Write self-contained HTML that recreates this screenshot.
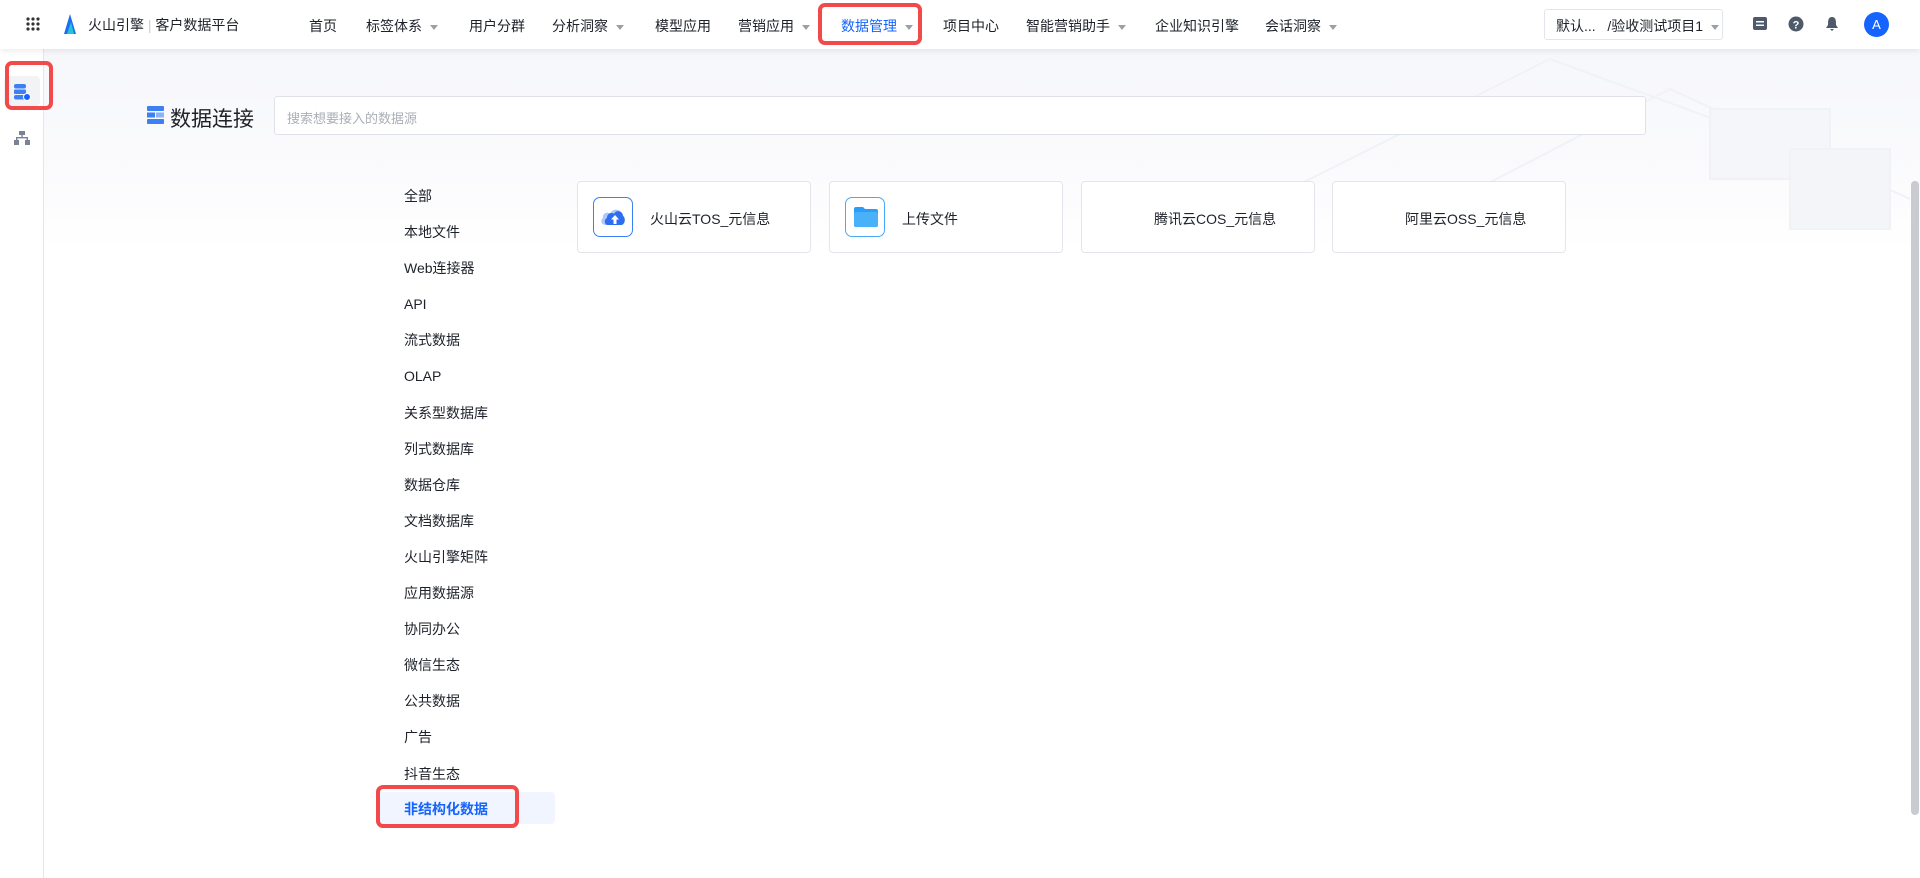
<!DOCTYPE html>
<html><head><meta charset="utf-8"><style>
*{box-sizing:border-box;margin:0;padding:0}
body{width:1920px;height:878px;overflow:hidden;font-family:"Liberation Sans","Noto Sans CJK SC",sans-serif;background:#fff;position:relative;color:#1d2129}
.top{position:absolute;left:0;top:0;width:1920px;height:49px;background:#fff;box-shadow:0 2px 6px rgba(0,0,0,.08);z-index:5}
.nav{position:absolute;top:16px;font-size:14px;color:#1d2129;white-space:nowrap}
.caret{display:inline-block;margin-left:8px;width:0;height:0;border-left:4px solid transparent;border-right:4px solid transparent;border-top:5px solid #9aa0a8;vertical-align:middle}
.red{position:absolute;border:4px solid #f24a4a;border-radius:7px}
.bg{position:absolute;left:44px;top:49px;width:1876px;height:829px;background:linear-gradient(180deg,#f6f7fb 0,#fbfbfd 130px,#fff 200px)}
.side{position:absolute;left:0;top:49px;width:44px;height:829px;background:#fff;border-right:1px solid #e5e6eb}
.menu{position:absolute;left:404px;font-size:14px;color:#1d2129}
.card{position:absolute;top:181px;width:234px;height:72px;background:#fff;border:1px solid #e2e5ea;border-radius:4px;font-size:14px}
.card span{position:absolute;top:27px}
.ic{position:absolute;left:15px;top:15px;width:40px;height:40px;border:1.5px solid #3d7ff5;border-radius:7px;background:#fff}
</style></head><body>
<div class="bg"></div>
<svg style="position:absolute;left:1150px;top:49px" width="770" height="200" viewBox="0 0 770 200"><g fill="none" stroke="#f0f2f6" stroke-width="2"><path d="M100 160 L400 10 L700 120"/><path d="M250 180 L520 40 L760 150"/><rect x="560" y="60" width="120" height="70" fill="#f5f6f9"/><rect x="640" y="100" width="100" height="80" fill="#f4f5f8"/></g></svg>
<div class="top">
 <svg style="position:absolute;left:26px;top:17px" width="14" height="14"><g fill="#333"><circle cx="2" cy="2" r="1.6"/><circle cx="7" cy="2" r="1.6"/><circle cx="12" cy="2" r="1.6"/><circle cx="2" cy="7" r="1.6"/><circle cx="7" cy="7" r="1.6"/><circle cx="12" cy="7" r="1.6"/><circle cx="2" cy="12" r="1.6"/><circle cx="7" cy="12" r="1.6"/><circle cx="12" cy="12" r="1.6"/></g></svg>
 <svg style="position:absolute;left:62px;top:14px" width="16" height="20"><path d="M2 20 L8 0 L14 20 Z" fill="#1a6ef5"/><path d="M5 20 L9 8 L12 20Z" fill="#29c2d6"/></svg>
 <div class="nav" style="left:88px;top:15px">火山引擎 <span style="color:#ccc">|</span> 客户数据平台</div>
 <div class="nav" style="left:309px">首页</div>
 <div class="nav" style="left:366px">标签体系<i class="caret"></i></div>
 <div class="nav" style="left:469px">用户分群</div>
 <div class="nav" style="left:552px">分析洞察<i class="caret"></i></div>
 <div class="nav" style="left:655px">模型应用</div>
 <div class="nav" style="left:738px">营销应用<i class="caret"></i></div>
 <div class="nav" style="left:841px;color:#1664ff">数据管理<i class="caret"></i></div>
 <div class="red" style="left:818px;top:3px;width:104px;height:42px"></div>
 <div class="nav" style="left:943px">项目中心</div>
 <div class="nav" style="left:1026px">智能营销助手<i class="caret"></i></div>
 <div class="nav" style="left:1155px">企业知识引擎</div>
 <div class="nav" style="left:1265px">会话洞察<i class="caret"></i></div>
 <div style="position:absolute;left:1544px;top:9px;width:179px;height:31px;border:1px solid #e2e5ea;border-radius:3px;font-size:14px;padding:6px 0 0 11px;white-space:nowrap">默认...&nbsp;&nbsp; /验收测试项目1<i class="caret"></i></div>
 <svg style="position:absolute;left:1753px;top:17px" width="14" height="15"><rect x="0" y="0" width="14" height="13" rx="2" fill="#4e5969"/><rect x="3" y="4" width="8" height="1.5" fill="#fff"/><rect x="3" y="7.5" width="8" height="1.5" fill="#fff"/></svg>
 <svg style="position:absolute;left:1788px;top:16px" width="16" height="16"><circle cx="8" cy="8" r="7.5" fill="#4e5969"/><text x="8" y="12.5" font-size="11" font-weight="bold" fill="#fff" text-anchor="middle" font-family="Liberation Sans">?</text></svg>
 <svg style="position:absolute;left:1825px;top:16px" width="14" height="16"><path d="M7 1 C3 1 3 5 3 9 L1 12 H13 L11 9 C11 5 11 1 7 1Z M5 13 H9 L7 15Z" fill="#4e5969"/></svg>
 <div style="position:absolute;left:1864px;top:12px;width:25px;height:25px;border-radius:50%;background:#1664ff;color:#fff;font-size:13px;text-align:center;line-height:25px">A</div>
</div>
<div class="side">
 <div style="position:absolute;left:4px;top:27px;width:36px;height:30px;background:#f2f3f5;border-radius:4px"></div>
 <svg style="position:absolute;left:13px;top:34px" width="18" height="18"><rect x="1" y="1" width="12" height="4.5" rx="2" fill="#3d7ff5"/><rect x="1" y="6.5" width="12" height="4.5" rx="1" fill="#3d7ff5"/><rect x="1" y="12" width="12" height="4.5" rx="2" fill="#3d7ff5"/><circle cx="14" cy="14" r="3.5" fill="#1664ff" stroke="#fff"/></svg>
 <svg style="position:absolute;left:14px;top:82px" width="16" height="14"><g fill="#7a8396"><rect x="5" y="0" width="6" height="4"/><rect x="0" y="9" width="5" height="5"/><rect x="11" y="9" width="5" height="5"/><rect x="7.3" y="4" width="1.4" height="3"/><rect x="2" y="6" width="12" height="1.4"/><rect x="2" y="6" width="1.4" height="3"/><rect x="12.6" y="6" width="1.4" height="3"/></g></svg>
</div>
<div class="red" style="left:5px;top:61px;width:48px;height:49px"></div>
<svg style="position:absolute;left:147px;top:106px" width="17" height="18"><rect x="0" y="0" width="17" height="5" rx="1" fill="#3d7ff5"/><rect x="0" y="6.5" width="8" height="5" fill="#3d7ff5"/><rect x="9" y="6.5" width="8" height="5" fill="#8ab2f8"/><rect x="0" y="13" width="17" height="5" rx="1" fill="#3d7ff5"/></svg>
<div style="position:absolute;left:170px;top:103px;font-size:21px;color:#1d2129">数据连接</div>
<div style="position:absolute;left:274px;top:96px;width:1372px;height:39px;background:#fff;border:1px solid #dfe2e8;border-radius:3px;font-size:13px;color:#a9aeb8;padding:11px 12px">搜索想要接入的数据源</div>
<div class="menu" style="top:178px;line-height:36.1px">全部<br>本地文件<br>Web连接器<br>API<br>流式数据<br>OLAP<br>关系型数据库<br>列式数据库<br>数据仓库<br>文档数据库<br>火山引擎矩阵<br>应用数据源<br>协同办公<br>微信生态<br>公共数据<br>广告<br>抖音生态</div>
<div style="position:absolute;left:377px;top:792px;width:178px;height:32px;background:#f0f5ff;border-radius:4px"></div>
<div class="menu" style="top:799px;color:#1664ff;font-weight:bold">非结构化数据</div>
<div class="red" style="left:376px;top:785px;width:143px;height:43px"></div>
<div class="card" style="left:577px"><div class="ic"><svg style="position:absolute;left:5px;top:6px" width="28" height="24"><path d="M7 21 C2 21 1 16 4 14 C3 9 9 7 11 10 C13 4 22 4 23 11 C27 12 27 21 22 21Z" fill="#aec8fb"/><path d="M9 21 C5 21 5 15 8 14 C8 9 13 8 15 10 C17 5 24 7 24 12 C27 14 26 21 22 21Z" fill="#2f6df0"/><path d="M16 11 L20 15.5 H17.5 V20 H14.5 V15.5 H12Z" fill="#fff"/></svg></div><span style="left:72px">火山云TOS_元信息</span></div>
<div class="card" style="left:829px"><div class="ic" style="border-color:#4aa8f8"><svg style="position:absolute;left:8px;top:9px" width="24" height="20"><path d="M0 2 Q0 0 2 0 H9 L11 2 H22 Q24 2 24 4 V18 Q24 20 22 20 H2 Q0 20 0 18Z" fill="#2b9cf7"/><rect x="0" y="5" width="24" height="15" rx="2" fill="#49b0fa"/></svg></div><span style="left:72px">上传文件</span></div>
<div class="card" style="left:1081px"><span style="left:72px">腾讯云COS_元信息</span></div>
<div class="card" style="left:1332px"><span style="left:72px">阿里云OSS_元信息</span></div>
<div style="position:absolute;left:1911px;top:181px;width:8px;height:634px;background:#c9cbd0;border-radius:4px"></div>
</body></html>
